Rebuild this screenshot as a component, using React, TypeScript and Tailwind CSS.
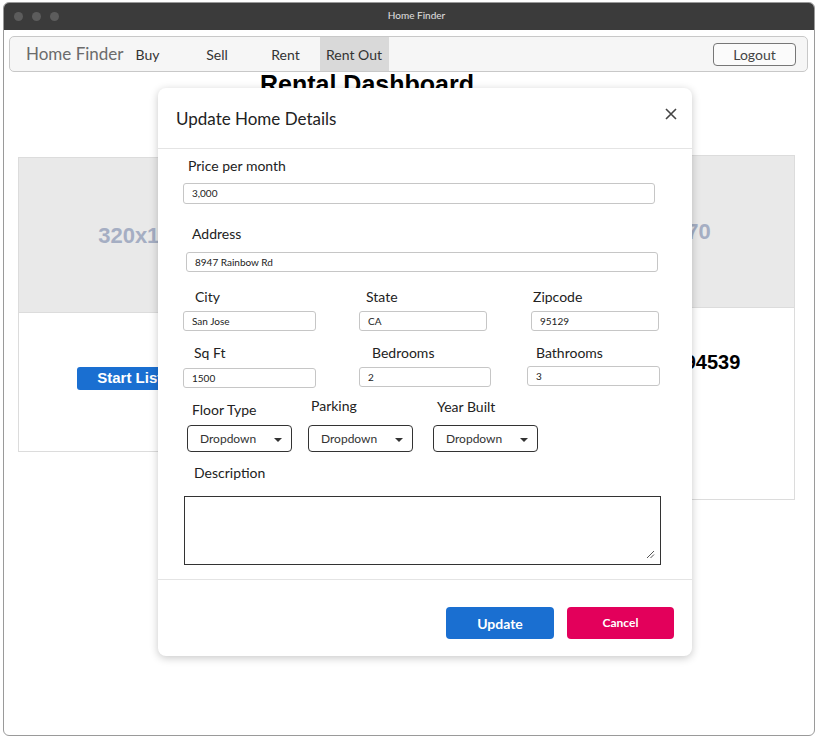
import React from "react";

const font = { fontFamily: '"Lato", "Noto Sans", sans-serif' };
const arial = { fontFamily: '"Liberation Sans", Arial, sans-serif' };

function TextInput({ value, className }: { value: string; className: string }) {
  return (
    <div
      className={`flex items-center rounded-[3px] border border-[#c6c6c6] bg-white pl-[8px] text-[10px] text-[#222] ${className}`}
    >
      {value}
    </div>
  );
}

function Dropdown() {
  return (
    <div className="flex h-[27px] w-[105px] items-center justify-between rounded-[4px] border border-[#333] bg-white pl-[12px] pr-[9px] text-[12px] text-[#333]">
      <span>Dropdown</span>
      <svg width="8" height="4" viewBox="0 0 8 4" className="mt-[2px]">
        <path d="M0 0 L8 0 L4 4 Z" fill="#333" />
      </svg>
    </div>
  );
}

function Label({ text, className = "" }: { text: string; className?: string }) {
  return (
    <div className={`h-[18px] pt-[1px] text-[14px] leading-[18px] text-[#222] ${className}`}>
      {text}
    </div>
  );
}

function PlaceholderImage({ h }: { h: string }) {
  return (
    <div
      className={`flex items-center justify-center border-b border-[#dcdcdc] bg-[#e9e9e9] text-[22px] font-bold text-[#a5aec3] ${h}`}
      style={arial}
    >
      320x170
    </div>
  );
}

export default function App() {
  return (
    <div className="relative h-[737px] w-[817px] overflow-hidden bg-white" style={font}>
      {/* window frame */}
      <div className="ml-[3px] mt-[2px] flex h-[734px] w-[812px] flex-col overflow-hidden rounded-[6px] border border-[#9a9a9a] bg-white">
        <div className="relative flex h-[27px] shrink-0 items-center bg-[#3b3b3b]">
          <div className="flex gap-[9px] pl-[10px]">
            <span className="h-[9px] w-[9px] rounded-full bg-[#5c5c5c]" />
            <span className="h-[9px] w-[9px] rounded-full bg-[#5c5c5c]" />
            <span className="h-[9px] w-[9px] rounded-full bg-[#5c5c5c]" />
          </div>
          <div className="-mt-[2px] flex-1 pr-[40px] text-center text-[10px] text-[#e0e0e0]">Home Finder</div>
        </div>

        {/* nav */}
        <div className="ml-[5px] mr-[6px] mt-[6px] flex h-[36px] items-center rounded-[5px] border border-[#c8c8c8] bg-[#f6f6f6] text-[14px] text-[#333]">
          <span className="ml-[16px] text-[17px] text-[#6b6b6b]">Home Finder</span>
          <span className="ml-[12px] w-[47px]">Buy</span>
          <span className="w-[69px] text-center">Sell</span>
          <span className="w-[68px] text-center">Rent</span>
          <span className="flex h-full w-[69px] items-center justify-center bg-[#d9d9d9]">Rent Out</span>
          <div className="flex-1" />
          <div className="mr-[11px] flex h-[23px] w-[83px] items-center justify-center rounded-[4px] border border-[#777] bg-[#fbfbfb] text-[#444]">
            Logout
          </div>
        </div>

        <h1 className="-mt-[2px] pl-[256px] text-[25px] font-bold leading-[28px] text-black" style={arial}>
          Rental Dashboard
        </h1>

        {/* cards */}
        <div className="ml-[14px] mt-[57px] flex w-[777px] items-start justify-between">
          <div className="mt-[2px] flex h-[295px] w-[246px] flex-col border border-[#dcdcdc] bg-white">
            <PlaceholderImage h="h-[155px]" />
            <div className="flex justify-center pt-[54px]">
              <div
                className="flex h-[23px] w-[128px] items-center justify-center rounded-[3px] bg-[#1a6fd1] text-[15px] font-bold text-white"
                style={arial}
              >
                Start Listing
              </div>
            </div>
          </div>
          <div className="flex h-[345px] w-[254px] flex-col border border-[#dcdcdc] bg-white">
            <PlaceholderImage h="h-[152px]" />
            <div className="pl-[10px] pt-[18px] text-[20px] font-bold leading-[24px] text-black" style={arial}>
              <div className="pl-[18px]">Rainbow Rd,</div>
              <div>San Jose, CA 94539</div>
            </div>
          </div>
        </div>
      </div>

      {/* modal */}
      <div className="absolute left-[158px] top-[88px] flex h-[568px] w-[534px] flex-col rounded-[8px] bg-white shadow-[0_2px_8px_rgba(0,0,0,0.22)]">
        <div className="flex h-[61px] items-center justify-between border-b border-[#e4e4e4] pl-[18px] pr-[15px]">
          <span className="pt-[2px] text-[17px] text-[#222]">Update Home Details</span>
          <svg width="12" height="12" viewBox="0 0 12 12" className="-mt-[8px]">
            <path d="M1 1 L11 11 M11 1 L1 11" stroke="#444" strokeWidth="1.6" />
          </svg>
        </div>

        <div className="flex flex-col">
          <Label text="Price per month" className="ml-[30px] mt-[7px]" />
          <TextInput value="3,000" className="ml-[25px] mt-[9px] h-[21px] w-[472px]" />

          <Label text="Address" className="ml-[34px] mt-[20px]" />
          <TextInput value="8947 Rainbow Rd" className="ml-[28px] mt-[10px] h-[20px] w-[472px]" />

          <div className="mt-[15px] flex">
            <div className="ml-[25px] w-[133px]">
              <Label text="City" className="pl-[12px]" />
              <TextInput value="San Jose" className="mt-[6px] h-[20px] w-[133px]" />
            </div>
            <div className="ml-[43px] w-[128px]">
              <Label text="State" className="pl-[7px]" />
              <TextInput value="CA" className="mt-[6px] h-[20px] w-[128px]" />
            </div>
            <div className="ml-[44px] w-[128px]">
              <Label text="Zipcode" className="pl-[2px]" />
              <TextInput value="95129" className="mt-[6px] h-[20px] w-[128px]" />
            </div>
          </div>

          <div className="mt-[12px] flex">
            <div className="ml-[25px] w-[133px]">
              <Label text="Sq Ft" className="pl-[11px]" />
              <TextInput value="1500" className="mt-[7px] h-[20px] w-[133px]" />
            </div>
            <div className="ml-[43px] w-[132px]">
              <Label text="Bedrooms" className="pl-[13px]" />
              <TextInput value="2" className="mt-[6px] h-[20px] w-[132px]" />
            </div>
            <div className="ml-[36px] w-[133px]">
              <Label text="Bathrooms" className="pl-[9px]" />
              <TextInput value="3" className="mt-[5px] h-[20px] w-[133px]" />
            </div>
          </div>

          <div className="mt-[8px] flex">
            <div className="ml-[29px] w-[105px]">
              <div className="h-[29px] pt-[4px]">
                <Label text="Floor Type" className="pl-[5px]" />
              </div>
              <Dropdown />
            </div>
            <div className="ml-[16px] w-[105px]">
              <div className="h-[29px]">
                <Label text="Parking" className="pl-[3px]" />
              </div>
              <Dropdown />
            </div>
            <div className="ml-[20px] w-[105px]">
              <div className="h-[29px] pt-[1px]">
                <Label text="Year Built" className="pl-[4px]" />
              </div>
              <Dropdown />
            </div>
          </div>

          <Label text="Description" className="ml-[36px] mt-[11px]" />
          <div className="relative ml-[26px] mt-[15px] h-[69px] w-[477px] border border-[#333] bg-white">
            <svg width="9" height="9" viewBox="0 0 9 9" className="absolute bottom-[5px] right-[5px]">
              <path d="M1 8 L8 1 M4.5 8 L8 4.5" stroke="#555" strokeWidth="1" />
            </svg>
          </div>
        </div>

        <div className="mt-[14px] border-t border-[#e4e4e4]" />

        <div className="mt-[27px] flex justify-end gap-[13px] pr-[18px]">
          <div className="flex h-[32px] w-[108px] items-center justify-center rounded-[4px] bg-[#1a6fd1] text-[14px] font-bold text-white">
            Update
          </div>
          <div className="flex h-[32px] w-[107px] items-center justify-center rounded-[4px] bg-[#e3005b] text-[12px] font-bold text-white">
            Cancel
          </div>
        </div>
      </div>
    </div>
  );
}
